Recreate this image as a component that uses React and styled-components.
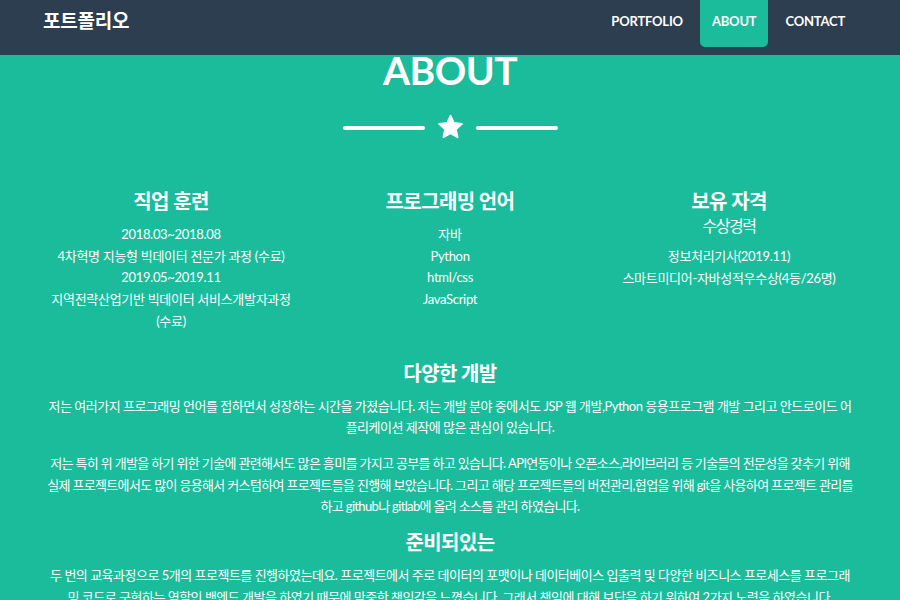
import React from 'react'
import styled, { createGlobalStyle } from 'styled-components'

const GlobalStyle = createGlobalStyle`
  body {
    margin: 0;
    background: #1abc9c;
    font-family: Lato, "Noto Sans CJK KR", sans-serif;
    color: #fff;
  }
`

const Nav = styled.nav`
  display: flex;
  justify-content: space-between;
  align-items: flex-start;
  height: 55px;
  padding: 0 43px;
  background: #2c3e50;
`

const Brand = styled.div`
  font-size: 19px;
  font-weight: 700;
  letter-spacing: -0.2px;
  line-height: 42px;
`

const Menu = styled.ul`
  display: flex;
  gap: 5px;
  margin: 0;
  padding: 0;
  list-style: none;
`

const MenuItem = styled.li`
  height: 47px;
  padding: 0 12px;
  line-height: 42px;
  font-size: 13px;
  font-weight: 700;
  letter-spacing: -0.2px;
  text-transform: uppercase;
  border-radius: 0 0 5px 5px;
  background: ${p => (p.active ? '#1abc9c' : 'transparent')};
`

const Section = styled.section`
  display: flex;
  flex-direction: column;
  align-items: center;
`

const Title = styled.h2`
  margin: 0;
  font-size: 39px;
  font-weight: 700;
  line-height: 31px;
  letter-spacing: -0.5px;
`

const Divider = styled.div`
  display: flex;
  align-items: center;
  gap: 12px;
  margin-top: 28px;
`

const Line = styled.span`
  width: 82px;
  height: 4px;
  border-radius: 2px;
  background: #fff;
`

const Star = () => (
  <svg width="27" height="27" viewBox="0 0 24 24">
    <polygon
      points="12,1.5 14.94,7.95 22.2,8.7 16.76,13.55 18.3,20.7 12,17 5.7,20.7 7.24,13.55 1.8,8.7 9.06,7.95"
      fill="#fff"
      stroke="#fff"
      strokeWidth="1.6"
      strokeLinejoin="round"
    />
  </svg>
)

const Columns = styled.div`
  display: grid;
  grid-template-columns: repeat(3, 1fr);
  width: 837px;
  margin-top: 46px;
`

const Column = styled.div`
  padding: 0 15px;
  text-align: center;
`

const Heading = styled.h3`
  margin: 0;
  font-size: 20px;
  font-weight: 700;
  letter-spacing: -0.6px;
  line-height: 28px;
`

const SubHeading = styled.h4`
  margin: 0 0 4px;
  font-size: 16px;
  font-weight: 400;
  letter-spacing: -1.5px;
  line-height: 22px;
`

const Body = styled.p`
  margin: 9px 0 0;
  font-size: 13px;
  line-height: 21.7px;
  letter-spacing: -0.3px;
`

const Story = styled.div`
  width: 810px;
  margin-top: 28px;
  text-align: center;
`

const StoryHeading = styled(Heading)`
  margin-bottom: 11px;
  line-height: 24px;
`

const Paragraph = styled.p`
  margin: 0 0 ${p => (p.$last ? 12 : 14)}px;
  font-size: 13px;
  line-height: 21.7px;
  letter-spacing: ${p => (p.$tight ? -0.66 : -0.5)}px;
`

export default function App() {
  return (
    <>
      <GlobalStyle />
      <Nav>
        <Brand>포트폴리오</Brand>
        <Menu>
          <MenuItem>Portfolio</MenuItem>
          <MenuItem active>About</MenuItem>
          <MenuItem>Contact</MenuItem>
        </Menu>
      </Nav>
      <Section>
        <Title>ABOUT</Title>
        <Divider>
          <Line />
          <Star />
          <Line />
        </Divider>
        <Columns>
          <Column>
            <Heading>직업 훈련</Heading>
            <Body>
              2018.03~2018.08<br />
              4차혁명 지능형 빅데이터 전문가 과정 (수료)<br />
              2019.05~2019.11<br />
              지역전략산업기반 빅데이터 서비스개발자과정 (수료)
            </Body>
          </Column>
          <Column>
            <Heading>프로그래밍 언어</Heading>
            <Body>
              자바<br />
              Python<br />
              html/css<br />
              JavaScript
            </Body>
          </Column>
          <Column>
            <Heading>보유 자격</Heading>
            <SubHeading>수상경력</SubHeading>
            <Body>
              정보처리기사(2019.11)<br />
              스마트미디어-자바성적우수상(4등/26명)
            </Body>
          </Column>
        </Columns>
        <Story>
          <StoryHeading>다양한 개발</StoryHeading>
          <Paragraph>
            저는 여러가지 프로그래밍 언어를 접하면서 성장하는 시간을 가졌습니다. 저는 개발 분야 중에서도 JSP 웹 개발,Python 응용프로그램 개발 그리고 안드로이드 어플리케이션 제작에 많은 관심이 있습니다.
          </Paragraph>
          <Paragraph $tight $last>
            저는 특히 위 개발을 하기 위한 기술에 관련해서도 많은 흥미를 가지고 공부를 하고 있습니다. API연동이나 오픈소스,라이브러리 등 기술들의 전문성을 갖추기 위해 실제 프로젝트에서도 많이 응용해서 커스텀하여 프로젝트들을 진행해 보았습니다. 그리고 해당 프로젝트들의 버전관리,협업을 위해 git을 사용하여 프로젝트 관리를 하고 github나 gitlab에 올려 소스를 관리 하였습니다.
          </Paragraph>
          <StoryHeading>준비되있는</StoryHeading>
          <Paragraph>
            두 번의 교육과정으로 5개의 프로젝트를 진행하였는데요. 프로젝트에서 주로 데이터의 포맷이나 데이터베이스 입출력 및 다양한 비즈니스 프로세스를 프로그래밍 코드로 구현하는 역할인 백엔드 개발을 하였기 때문에 막중한 책임감을 느꼈습니다. 그래서 책임에 대해 보답을 하기 위하여 2가지 노력을 하였습니다.
          </Paragraph>
        </Story>
      </Section>
    </>
  )
}
